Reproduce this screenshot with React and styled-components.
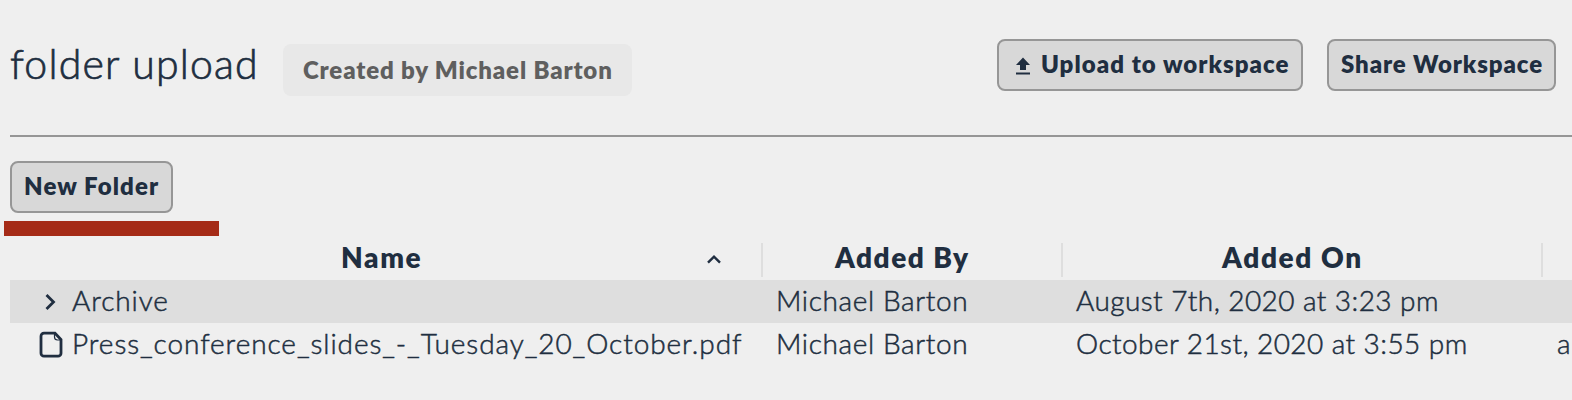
import React from 'react';
import styled, { createGlobalStyle } from 'styled-components';

const Global = createGlobalStyle`
  * { box-sizing: border-box; }
  body {
    margin: 0;
    background: #efefef;
    color: #202e40;
    font-family: Lato, "Open Sans", sans-serif;
    overflow: hidden;
  }
`;

const Page = styled.main`
  width: 100%;
  height: 400px;
  padding-left: 10px;
  overflow: hidden;
`;

const Header = styled.header`
  display: flex;
  align-items: flex-start;
  height: 137px;
  padding: 39px 16px 0 0;
  border-bottom: 2px solid #969696;
`;

const Title = styled.h1`
  width: 273px;
  margin: 0;
  font-size: 41px;
  font-weight: 300;
  line-height: 49px;
  letter-spacing: 1.2px;
  -webkit-text-stroke: 0.7px currentColor;
  white-space: nowrap;
`;

const Badge = styled.span`
  width: 349px;
  height: 52px;
  margin-top: 5px;
  padding-left: 20px;
  border-radius: 8px;
  background: #e8e8e8;
  color: #5f5f5f;
  font-size: 24px;
  font-weight: 800;
  line-height: 52px;
  letter-spacing: ${(p) => p.$spacing}px;
  white-space: nowrap;
`;

const Actions = styled.div`
  display: flex;
  gap: 24px;
  margin-left: auto;
`;

const Button = styled.button`
  display: flex;
  align-items: center;
  width: ${(p) => p.$width}px;
  height: 52px;
  padding: 0 0 3px 12px;
  border: 2px solid #969696;
  border-radius: 8px;
  background: #d8d8d8;
  color: inherit;
  font: 800 24px/44px Lato, sans-serif;
  letter-spacing: ${(p) => p.$spacing}px;
  white-space: nowrap;
`;

const UploadIcon = styled.svg`
  flex: none;
  width: 14px;
  height: 18px;
  margin: 5px 11px 0 5px;
`;

const Toolbar = styled.div`
  padding-top: 24px;
`;

const Marker = styled.div`
  width: 215px;
  height: 15px;
  margin: 8px 0 0 -6px;
  background: #a52b17;
`;

const Row = styled.div`
  display: grid;
  grid-template-columns: 753px 300px 480px 1fr;
  height: 43px;
  background: ${(p) => (p.$shaded ? '#dedede' : 'transparent')};
`;

const HeadRow = styled(Row)`
  height: 34px;
  margin: 7px 0 3px;
`;

const HeadCell = styled.div`
  display: flex;
  align-items: center;
  border-right: ${(p) => (p.$last ? 0 : 2)}px solid #dedede;
  padding: 0 0 5px ${(p) => p.$inset || 0}px;
  font-size: 28px;
  font-weight: 800;
  line-height: 29px;
  letter-spacing: ${(p) => p.$spacing || 0}px;
  white-space: nowrap;
`;

const SortIcon = styled.svg`
  width: 16px;
  height: 11px;
  margin: 3px 39px 0 auto;
`;

const Cell = styled.div`
  display: flex;
  align-items: center;
  padding: 0 0 2px ${(p) => p.$inset || 0}px;
  font-size: 28px;
  font-weight: 300;
  line-height: 41px;
  letter-spacing: ${(p) => p.$spacing || 0}px;
  -webkit-text-stroke: 0.5px currentColor;
  white-space: nowrap;
`;

const RowIcon = styled.svg`
  flex: none;
  width: 26px;
  height: 28px;
  margin: 3px 8px 0 28px;
`;

export default function App() {
  return (
    <>
      <Global />
      <Page>
        <Header>
          <Title>folder upload</Title>
          <Badge $spacing={0.85}>Created by Michael Barton</Badge>
          <Actions>
            <Button $width={306} $spacing={1.05}>
              <UploadIcon viewBox="0 0 14 18">
                <path d="M7 0.5 14 8H10V13H4V8H0ZM0 15.5H14V17.5H0Z" fill="currentColor" />
              </UploadIcon>
              <span>Upload to workspace</span>
            </Button>
            <Button $width={229} $spacing={0.9}>Share Workspace</Button>
          </Actions>
        </Header>
        <Toolbar>
          <Button $width={163} $spacing={1.1}>New Folder</Button>
        </Toolbar>
        <Marker />
        <HeadRow>
          <HeadCell $inset={331} $spacing={1.6}>
            <span>Name</span>
            <SortIcon viewBox="0 0 16 11">
              <path d="M2 8.7 8 2.7 14 8.7" fill="none" stroke="currentColor" strokeWidth="2.4" />
            </SortIcon>
          </HeadCell>
          <HeadCell $inset={72} $spacing={1.45}>Added By</HeadCell>
          <HeadCell $inset={159} $spacing={1.6}>Added On</HeadCell>
          <HeadCell $last />
        </HeadRow>
        <Row $shaded>
          <Cell $spacing={0.9}>
            <RowIcon viewBox="0 0 26 28">
              <path d="M8.5 7 15.5 14 8.5 21" fill="none" stroke="currentColor" strokeWidth="2.8" />
            </RowIcon>
            <span>Archive</span>
          </Cell>
          <Cell $inset={13} $spacing={0.63}>Michael Barton</Cell>
          <Cell $inset={13} $spacing={0.43}>August 7th, 2020 at 3:23 pm</Cell>
          <Cell />
        </Row>
        <Row>
          <Cell $spacing={0.93}>
            <RowIcon viewBox="0 0 26 28">
              <path d="M6 2.2H17L23 8.5V22.2A3 3 0 0 1 20 25.2H6A3 3 0 0 1 3 22.2V5.2A3 3 0 0 1 6 2.2Z" fill="none" stroke="currentColor" strokeWidth="2.8" />
              <path d="M16.5 3V6A3 3 0 0 0 19.5 9H22.5" fill="none" stroke="currentColor" strokeWidth="1.2" />
            </RowIcon>
            <span>Press_conference_slides_-_Tuesday_20_October.pdf</span>
          </Cell>
          <Cell $inset={13} $spacing={0.63}>Michael Barton</Cell>
          <Cell $inset={13} $spacing={0.43}>October 21st, 2020 at 3:55 pm</Cell>
          <Cell $inset={14}>a</Cell>
        </Row>
      </Page>
    </>
  );
}
